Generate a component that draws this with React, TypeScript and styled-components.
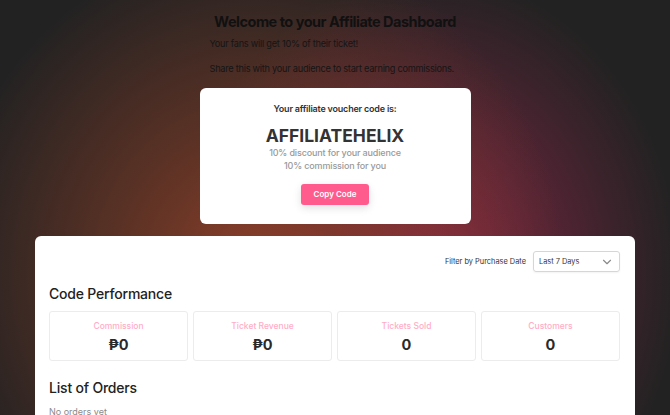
import React from 'react';
import styled, {createGlobalStyle} from 'styled-components';
import {ChevronDown} from 'lucide-react';

const COLORS = {
  text: '#222222',
  muted: '#9a9a9a',
  pink: '#ff5c8d',
  pinkLight: '#ffadc6',
  border: '#ececec',
  white: '#FFFFFF',
};

const GlobalStyle = createGlobalStyle`
  html, body {
    margin: 0;
    padding: 0;
    background: #232222;
    font-family: Inter, "Noto Sans", "Liberation Sans", sans-serif;
    color: ${COLORS.text};
    overflow: hidden;
  }
  * { box-sizing: border-box; }
`;

const Page = styled.div`
  height: 100vh;
  overflow: hidden;
  padding-top: 13px;
  display: flex;
  flex-direction: column;
  align-items: center;
  background:
    radial-gradient(ellipse 310px 330px at 38% 66%, rgba(142, 64, 40, 0.95), rgba(142, 64, 40, 0) 100%),
    radial-gradient(ellipse 250px 300px at 64% 66%, rgba(140, 38, 72, 0.95), rgba(140, 38, 72, 0) 100%),
    #232222;
  & > * {
    flex-shrink: 0;
  }
`;

const Intro = styled.div`
  width: 271px;
  display: flex;
  flex-direction: column;
`;

const Title = styled.h1`
  margin: 0 -40px;
  text-align: center;
  font-size: 14.5px;
  font-weight: 700;
  letter-spacing: -0.5px;
  color: #111;
  line-height: 17px;
`;

const IntroText = styled.p`
  margin: ${(p: {gap: number}) => p.gap}px 0 0 10px;
  font-size: 9.2px;
  letter-spacing: -0.25px;
  line-height: 12px;
  color: #151515;
`;

const VoucherCard = styled.div`
  margin-top: 13px;
  width: 271px;
  height: 136px;
  background: ${COLORS.white};
  border-radius: 6px;
  padding-top: 15px;
  display: flex;
  flex-direction: column;
  align-items: center;
`;

const VoucherLabel = styled.div`
  font-size: 9px;
  font-weight: 600;
  letter-spacing: -0.2px;
  color: #333;
  line-height: 12px;
`;

const VoucherCode = styled.div`
  margin-top: 11px;
  font-size: 17.5px;
  font-weight: 700;
  color: #333;
  line-height: 20px;
`;

const VoucherNote = styled.div`
  font-size: 9px;
  font-weight: 500;
  letter-spacing: -0.15px;
  color: ${COLORS.muted};
  line-height: 13px;
  &:first-of-type {
    margin-top: 3.5px;
  }
`;

const CopyButton = styled.button`
  margin-top: 11.5px;
  width: 68px;
  height: 21px;
  flex-shrink: 0;
  border: none;
  border-radius: 3px;
  background: ${COLORS.pink};
  color: ${COLORS.white};
  font-family: inherit;
  font-size: 8px;
  font-weight: 600;
  box-shadow: 0 3px 8px rgba(0, 0, 0, 0.12);
  cursor: pointer;
`;

const Panel = styled.div`
  margin-top: 12px;
  width: 600px;
  flex: 1 0 auto;
  background: ${COLORS.white};
  border-radius: 6px 6px 0 0;
  padding: 15px 15px 0 14px;
`;

const FilterRow = styled.div`
  display: flex;
  justify-content: flex-end;
  align-items: center;
  gap: 7px;
`;

const FilterLabel = styled.span`
  font-size: 7.4px;
  color: #333;
`;

const Select = styled.div`
  width: 87px;
  height: 21px;
  border: 1px solid #d6d6d6;
  border-radius: 3px;
  display: flex;
  align-items: center;
  justify-content: space-between;
  padding: 0 5px 0 5px;
  font-size: 7.4px;
  color: #333;
  box-shadow: 0 1px 2px rgba(0, 0, 0, 0.05);
`;

const SectionTitle = styled.h2`
  margin: ${(p: {top: number}) => p.top}px 0 0;
  font-size: 14px;
  font-weight: 500;
  letter-spacing: -0.2px;
  line-height: 16px;
  color: ${COLORS.text};
`;

const StatsGrid = styled.div`
  margin-top: 9px;
  display: grid;
  grid-template-columns: repeat(4, 1fr);
  gap: 5px;
`;

const StatCard = styled.div`
  height: 50px;
  border: 1px solid ${COLORS.border};
  border-radius: 3px;
  display: flex;
  flex-direction: column;
  align-items: center;
  padding-top: 9px;
`;

const StatLabel = styled.div`
  font-size: 8.5px;
  font-weight: 500;
  color: ${COLORS.pinkLight};
  line-height: 11px;
`;

const StatValue = styled.div`
  margin-top: 4px;
  font-size: 14.5px;
  font-weight: 700;
  color: #2a2a2a;
  line-height: 17px;
`;

const EmptyText = styled.div`
  margin-top: 10px;
  font-size: 9px;
  color: #8a8a8a;
`;

const stats = [
  {label: 'Commission', value: '₱0'},
  {label: 'Ticket Revenue', value: '₱0'},
  {label: 'Tickets Sold', value: '0'},
  {label: 'Customers', value: '0'},
];

const App: React.FC = () => {
  return (
    <>
      <GlobalStyle />
      <Page>
        <Intro>
          <Title>Welcome to your Affiliate Dashboard</Title>
          <IntroText gap={8}>Your fans will get 10% of their ticket!</IntroText>
          <IntroText gap={13}>Share this with your audience to start earning commissions.</IntroText>
        </Intro>

        <VoucherCard>
          <VoucherLabel>Your affiliate voucher code is:</VoucherLabel>
          <VoucherCode>AFFILIATEHELIX</VoucherCode>
          <VoucherNote>10% discount for your audience</VoucherNote>
          <VoucherNote>10% commission for you</VoucherNote>
          <CopyButton>Copy Code</CopyButton>
        </VoucherCard>

        <Panel>
          <FilterRow>
            <FilterLabel>Filter by Purchase Date</FilterLabel>
            <Select>
              <span>Last 7 Days</span>
              <ChevronDown size={14} color="#8a8a8a" strokeWidth={2} />
            </Select>
          </FilterRow>

          <SectionTitle top={14}>Code Performance</SectionTitle>
          <StatsGrid>
            {stats.map((s) => (
              <StatCard key={s.label}>
                <StatLabel>{s.label}</StatLabel>
                <StatValue>{s.value}</StatValue>
              </StatCard>
            ))}
          </StatsGrid>

          <SectionTitle top={19}>List of Orders</SectionTitle>
          <EmptyText>No orders yet</EmptyText>
        </Panel>
      </Page>
    </>
  );
};

export default App;
